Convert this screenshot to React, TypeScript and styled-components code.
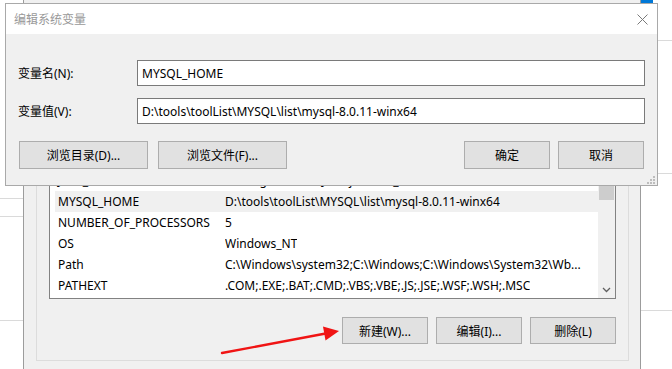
import React from 'react';
import styled, { createGlobalStyle } from 'styled-components';

const FONT = '"Noto Sans", "Noto Sans CJK SC", sans-serif';

const GlobalStyle = createGlobalStyle`
  html, body {
    margin: 0;
    padding: 0;
    background: #fff;
  }
  body {
    font-family: ${FONT};
    font-size: 12px;
    color: #000;
  }
`;

const Desktop = styled.div`
  position: relative;
  width: 672px;
  height: 369px;
  overflow: hidden;
  background: #fff;
`;

// panes of other windows peeking out at the edges
const SidePane = styled.div<{ $left: number; $width: number }>`
  position: absolute;
  top: 0;
  left: ${p => p.$left}px;
  width: ${p => p.$width}px;
  height: 100%;
  display: flex;
  flex-direction: column;
`;

const PaneLine = styled.div<{ $gap: number }>`
  margin-top: ${p => p.$gap}px;
  height: 1px;
  background: #dadada;
`;

const TaskStrip = styled.div`
  position: absolute;
  top: 0;
  left: 614px;
  height: 3px;
  display: flex;
`;

const TaskCell = styled.div<{ $blue?: boolean }>`
  width: 12px;
  background: ${p => (p.$blue ? '#0078d7' : '#f0f0f0')};
  border-left: 1px solid ${p => (p.$blue ? '#0078d7' : '#c8c8c8')};
`;

/* background window: environment variables */
const BgWindow = styled.div`
  position: absolute;
  left: 23px;
  top: 0;
  width: 618px;
  height: 369px;
  box-sizing: border-box;
  border-left: 1px solid #9c9c9c;
  border-right: 1px solid #9c9c9c;
  background: #f0f0f0;
  display: flex;
  flex-direction: column;
  justify-content: flex-end;
`;

const Group = styled.div`
  margin: 0 11px 8px 12px;
  border: 1px solid #dcdcdc;
  border-top: none;
  padding: 0 12px 16px 12px;
  display: flex;
  flex-direction: column;
`;

const ListBox = styled.div`
  height: 150px;
  border: 1px solid #828282;
  background: #fff;
  display: flex;
`;

const Rows = styled.div`
  flex: 1;
  min-width: 0;
  overflow: hidden;
  padding: 0 0 2px 5px;
  display: flex;
  flex-direction: column;
  justify-content: flex-end;
`;

const Row = styled.div<{ $selected?: boolean }>`
  height: 21px;
  flex-shrink: 0;
  display: flex;
  align-items: center;
  padding-left: 3px;
  background: ${p => (p.$selected ? '#f0f0f0' : 'transparent')};
  white-space: nowrap;
  overflow: hidden;
`;

const NameCell = styled.span`
  width: 167px;
  flex-shrink: 0;
`;

const ValueCell = styled.span`
  overflow: hidden;
`;

const ScrollBar = styled.div`
  width: 17px;
  flex-shrink: 0;
  background: #f0f0f0;
  display: flex;
  flex-direction: column;
  align-items: center;
`;

const Thumb = styled.div`
  margin-top: 34px;
  width: 15px;
  height: 18px;
  background: #cdcdcd;
`;

const ArrowCell = styled.div`
  margin-top: auto;
  height: 17px;
  display: flex;
  align-items: center;
  justify-content: center;
`;

const ButtonRow = styled.div<{ $top: number }>`
  margin-top: ${p => p.$top}px;
  display: flex;
  gap: 8px;
  justify-content: flex-end;
`;

const WinButton = styled.div<{ $w: number; $h: number }>`
  width: ${p => p.$w}px;
  height: ${p => p.$h}px;
  box-sizing: border-box;
  border: 1px solid #adadad;
  background: #e1e1e1;
  display: flex;
  align-items: center;
  justify-content: center;
  font-size: 12px;
  white-space: nowrap;
`;

/* front dialog */
const Dialog = styled.div`
  position: absolute;
  left: 5px;
  top: 3px;
  width: 653px;
  height: 183px;
  box-sizing: border-box;
  border: 1px solid #a9a9a9;
  background: #f0f0f0;
  display: flex;
  flex-direction: column;
`;

const TitleBar = styled.div`
  height: 30px;
  flex-shrink: 0;
  background: #fff;
  display: flex;
  align-items: center;
  padding: 0 9px 0 8px;
  color: #999;
  font-size: 12px;
`;

const TitleText = styled.span`
  flex: 1;
`;

const DialogBody = styled.div`
  flex: 1;
  padding: 26px 12px 16px 12px;
  display: flex;
  flex-direction: column;
  gap: 12px;
`;

const Field = styled.div`
  height: 26px;
  display: flex;
  align-items: center;
`;

const Label = styled.label`
  width: 119px;
  flex-shrink: 0;
`;

const TextBox = styled.div`
  flex: 1;
  height: 26px;
  box-sizing: border-box;
  border: 1px solid #7a7a7a;
  background: #fff;
  padding-left: 4px;
  display: flex;
  align-items: center;
  white-space: nowrap;
`;

const DialogButtons = styled.div`
  margin-top: 5px;
  padding: 0 1px;
  display: flex;
  align-items: center;
`;

const BtnGroup = styled.div<{ $gap: number }>`
  display: flex;
  gap: ${p => p.$gap}px;
`;

const Spacer = styled.div`
  flex: 1;
`;

const Grip = styled.svg`
  position: absolute;
  right: 2px;
  bottom: 1px;
`;

const Annotation = styled.svg`
  position: absolute;
  left: 215px;
  top: 320px;
`;

const rows = [
  { name: 'JAVA_HOME', value: 'C:\\Program Files\\Java\\jdk1.8.0_181' },
  { name: 'MYSQL_HOME', value: 'D:\\tools\\toolList\\MYSQL\\list\\mysql-8.0.11-winx64', selected: true },
  { name: 'NUMBER_OF_PROCESSORS', value: '5' },
  { name: 'OS', value: 'Windows_NT' },
  { name: 'Path', value: 'C:\\Windows\\system32;C:\\Windows;C:\\Windows\\System32\\Wb...' },
  { name: 'PATHEXT', value: '.COM;.EXE;.BAT;.CMD;.VBS;.VBE;.JS;.JSE;.WSF;.WSH;.MSC' },
];

const App: React.FC = () => {
  return (
    <Desktop>
      <GlobalStyle />

      <SidePane $left={0} $width={23}>
        <PaneLine $gap={198} />
        <PaneLine $gap={17} />
        <PaneLine $gap={103} />
      </SidePane>
      <SidePane $left={641} $width={31}>
        <PaneLine $gap={40} />
        <PaneLine $gap={132} />
        <PaneLine $gap={136} />
      </SidePane>
      <TaskStrip>
        <TaskCell />
        <TaskCell />
        <TaskCell $blue />
      </TaskStrip>

      <BgWindow>
        <Group>
          <ListBox>
            <Rows>
              {rows.map(r => (
                <Row key={r.name} $selected={r.selected}>
                  <NameCell>{r.name}</NameCell>
                  <ValueCell>{r.value}</ValueCell>
                </Row>
              ))}
            </Rows>
            <ScrollBar>
              <Thumb />
              <ArrowCell>
                <svg width="9" height="6" viewBox="0 0 9 6">
                  <path d="M1 1 L4.5 4.5 L8 1" fill="none" stroke="#606060" strokeWidth="1.3" />
                </svg>
              </ArrowCell>
            </ScrollBar>
          </ListBox>
          <ButtonRow $top={18}>
            <WinButton $w={86} $h={27}>新建(W)...</WinButton>
            <WinButton $w={86} $h={27}>编辑(I)...</WinButton>
            <WinButton $w={86} $h={27}>删除(L)</WinButton>
          </ButtonRow>
        </Group>
      </BgWindow>

      <Dialog>
        <TitleBar>
          <TitleText>编辑系统变量</TitleText>
          <svg width="11" height="11" viewBox="0 0 11 11">
            <path d="M0.5 0.5 L10.5 10.5 M10.5 0.5 L0.5 10.5" stroke="#7a7a7a" strokeWidth="1" fill="none" />
          </svg>
        </TitleBar>
        <DialogBody>
          <Field>
            <Label>变量名(N):</Label>
            <TextBox>MYSQL_HOME</TextBox>
          </Field>
          <Field>
            <Label>变量值(V):</Label>
            <TextBox>D:\tools\toolList\MYSQL\list\mysql-8.0.11-winx64</TextBox>
          </Field>
          <DialogButtons>
            <BtnGroup $gap={10}>
              <WinButton $w={129} $h={28}>浏览目录(D)...</WinButton>
              <WinButton $w={129} $h={28}>浏览文件(F)...</WinButton>
            </BtnGroup>
            <Spacer />
            <BtnGroup $gap={8}>
              <WinButton $w={86} $h={28}>确定</WinButton>
              <WinButton $w={86} $h={28}>取消</WinButton>
            </BtnGroup>
          </DialogButtons>
        </DialogBody>
        <Grip width="8" height="8" viewBox="0 0 8 8">
          <rect x="6" y="0" width="2" height="2" fill="#bdbdbd" />
          <rect x="3" y="3" width="2" height="2" fill="#bdbdbd" />
          <rect x="6" y="3" width="2" height="2" fill="#bdbdbd" />
          <rect x="0" y="6" width="2" height="2" fill="#bdbdbd" />
          <rect x="3" y="6" width="2" height="2" fill="#bdbdbd" />
          <rect x="6" y="6" width="2" height="2" fill="#bdbdbd" />
        </Grip>
      </Dialog>

      <Annotation width="130" height="40" viewBox="0 0 130 40">
        <line x1="7" y1="33" x2="112" y2="13.3" stroke="#f01414" strokeWidth="2.4" strokeLinecap="round" />
        <polygon points="124,11 108,6.5 110.5,20.5" fill="#f01414" />
      </Annotation>
    </Desktop>
  );
};

export default App;
